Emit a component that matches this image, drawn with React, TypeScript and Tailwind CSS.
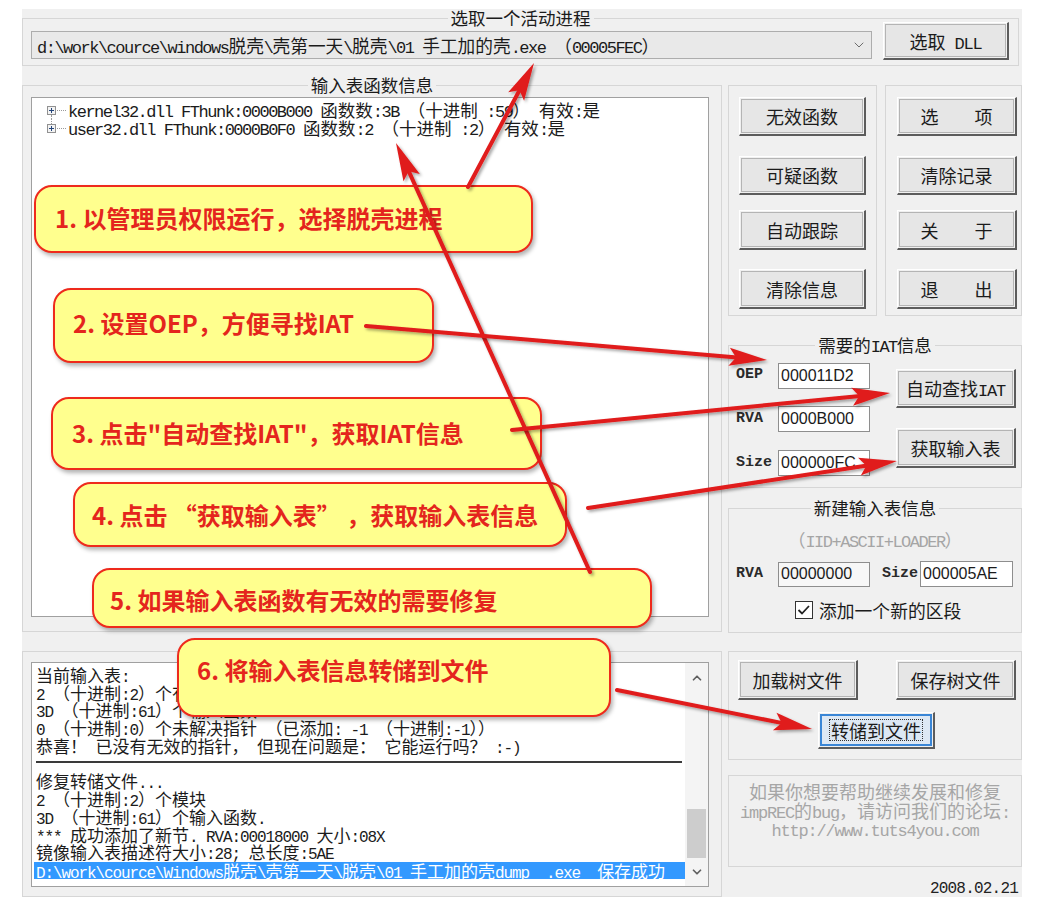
import React from "react";
import { ChevronDown, ChevronUp } from "lucide-react";

const A17 = "font-['Liberation_Mono',monospace] text-[17px] tracking-[-1.5px]";
const A16 = "font-['Liberation_Mono',monospace] text-[16px] tracking-[-1.1px]";
const A18 = "font-['Liberation_Mono',monospace] text-[17px] tracking-[-1.2px]";

function M({ t, a }: { t: string; a: string }) {
  const parts = t.split(/([\x20-\x7e]+)/);
  return (
    <>
      {parts.map((p, i) =>
        i % 2 === 1 ? (
          <span key={i} className={a}>
            {p}
          </span>
        ) : (
          <React.Fragment key={i}>{p}</React.Fragment>
        )
      )}
    </>
  );
}

function Group({
  title,
  className = "",
  bodyClass = "",
  children,
}: {
  title?: string;
  className?: string;
  bodyClass?: string;
  children?: React.ReactNode;
}) {
  return (
    <div className={`flex flex-col ${className}`}>
      <div className="flex h-[18px] shrink-0">
        <div className="flex-1 mt-[9px] border-t border-l border-[#d6d6d6]" />
        {title && (
          <span className="px-[3px] h-[18px] text-[17.5px] leading-[18px] text-[#1b1b1b] whitespace-pre">
            <M t={title} a={A17} />
          </span>
        )}
        <div className="flex-1 mt-[9px] border-t border-r border-[#d6d6d6]" />
      </div>
      <div className={`border-x border-b border-[#d6d6d6] ${bodyClass}`}>{children}</div>
    </div>
  );
}

function Btn({ label, className = "", focus = false }: { label: string; className?: string; focus?: boolean }) {
  return (
    <div
      className={`flex shrink-0 border-t border-l border-t-white border-l-white border-r-2 border-b-2 border-r-[#5c5c5c] border-b-[#5c5c5c] p-px ${className}`}
    >
      {focus ? (
        <div className="flex flex-1 items-center justify-center border-2 border-[#3a86d6] bg-[#dde8f4] text-[18px] leading-[20px] text-[#1b1b1b] whitespace-pre">
          <span className="outline-1 outline-dotted outline-[#333] px-[1px] h-[20px]">
            <M t={label} a={A18} />
          </span>
        </div>
      ) : (
        <div className="flex flex-1 items-center justify-center border border-[#b4b4b4] bg-[#e6e6e6] text-[18px] leading-[20px] text-[#1b1b1b] whitespace-pre">
          <span className="h-[20px]">
            <M t={label} a={A18} />
          </span>
        </div>
      )}
    </div>
  );
}

function Inp({ v, className = "" }: { v: string; className?: string }) {
  return (
    <div
      className={`flex items-center border border-[#8e8e8e] pl-[2px] font-['Liberation_Sans',sans-serif] text-[16px] leading-[18px] text-[#1b1b1b] ${className}`}
    >
      {v}
    </div>
  );
}

function Lbl({ t, className = "" }: { t: string; className?: string }) {
  return (
    <div className={`font-['Liberation_Mono',monospace] font-bold text-[15px] leading-[18px] text-[#2a2a2a] ${className}`}>
      {t}
    </div>
  );
}

function TreeRow({ t, first }: { t: string; first: boolean }) {
  return (
    <div className="flex h-[18px] items-center whitespace-pre text-[17.5px] leading-[18px] text-[#1b1b1b]">
      <div className="flex flex-col items-center w-[9px] h-[18px]">
        <div className={first ? "h-[4.5px]" : "h-[4.5px] border-l border-dotted border-[#9a9a9a]"} />
        <svg width="9" height="9" viewBox="0 0 9 9">
          <rect x="0.5" y="0.5" width="8" height="8" fill="#f3f3f3" stroke="#919191" />
          <path d="M2 4.5h5M4.5 2v5" stroke="#24457a" strokeWidth="1" />
        </svg>
        <div className={first ? "h-[4.5px] border-l border-dotted border-[#9a9a9a]" : "h-[4.5px]"} />
      </div>
      <div className="w-[9px] ml-px border-t border-dotted border-[#9a9a9a]" />
      <span className="ml-[2px] h-[18px]">
        <M t={t} a={A17} />
      </span>
    </div>
  );
}

function LogLine({ t }: { t: string }) {
  return (
    <div className="h-[17.7px]">
      <M t={t} a={A16} />
    </div>
  );
}

function head(x1: number, y1: number, x2: number, y2: number) {
  const dx = x2 - x1;
  const dy = y2 - y1;
  const L = Math.hypot(dx, dy);
  const ux = dx / L;
  const uy = dy / L;
  const len = 38;
  const w = 9;
  const bx = x2 - ux * len;
  const by = y2 - uy * len;
  const px = -uy;
  const py = ux;
  const pts = [
    [x2, y2],
    [bx + px * w, by + py * w],
    [bx + ux * 7, by + uy * 7],
    [bx - px * w, by - py * w],
  ];
  return { pts: pts.map((p) => p.join(",")).join(" "), bx: bx + ux * 8, by: by + uy * 8 };
}

const arrows: [number, number, number, number][] = [
  [468, 187, 534, 63],
  [590, 572, 396, 143],
  [366, 326, 767, 360],
  [512, 430, 890, 393],
  [588, 508, 897, 461],
  [617, 690, 812, 729],
];

function Arrows() {
  return (
    <svg className="absolute left-0 top-0 pointer-events-none" width="1056" height="915" viewBox="0 0 1056 915">
      <defs>
        <filter id="sh" x="-20%" y="-20%" width="140%" height="140%">
          <feDropShadow dx="2" dy="2" stdDeviation="1.5" floodColor="#000" floodOpacity="0.35" />
        </filter>
      </defs>
      {arrows.map(([x1, y1, x2, y2], i) => {
        const h = head(x1, y1, x2, y2);
        return (
          <g key={i} filter="url(#sh)">
            <line x1={x1} y1={y1} x2={h.bx} y2={h.by} stroke="#e01b1b" strokeWidth="4" strokeLinecap="round" />
            <polygon points={h.pts} fill="#e01b1b" />
          </g>
        );
      })}
    </svg>
  );
}

const BUB =
  "absolute rounded-[18px] border-[2.5px] border-[#ee2a1c] bg-[#ffff8e] shadow-[2px_3px_4px_rgba(0,0,0,0.3)] text-[24px] leading-[28px] font-bold text-[#e4251d] whitespace-pre";

function Bubbles() {
  return (
    <>
      <div className={`${BUB} left-[34px] top-[185px] w-[499px] h-[68px] pt-[17px] pl-[19px]`}>1. 以管理员权限运行，选择脱壳进程</div>
      <div className={`${BUB} left-[53px] top-[288px] w-[381px] h-[75px] pt-[19px] pl-[18px]`}>2. 设置OEP，方便寻找IAT</div>
      <div className={`${BUB} left-[51px] top-[397px] w-[491px] h-[73px] pt-[20px] pl-[19px]`}>3. 点击"自动查找IAT"，获取IAT信息</div>
      <div className={`${BUB} left-[73px] top-[482px] w-[494px] h-[65px] pt-[17px] pl-[17px]`}>4. 点击 “获取输入表” ，获取输入表信息</div>
      <div className={`${BUB} left-[92px] top-[568px] w-[560px] h-[60px] pt-[16px] pl-[16px]`}>5. 如果输入表函数有无效的需要修复</div>
      <div className={`${BUB} left-[177px] top-[638px] w-[434px] h-[79px] pt-[16px] pl-[18px]`}>6. 将输入表信息转储到文件</div>
    </>
  );
}

export default function App() {
  return (
    <div className="relative w-[1056px] h-[915px] overflow-hidden bg-white pl-[22px] pt-[9px] font-['Noto_Sans_CJK_SC',sans-serif] text-[#1b1b1b]">
      <div className="w-[1000px] h-[888px] bg-[#f0f0f0] flex flex-col">
        {/* top group */}
        <Group title="选取一个活动进程" className="w-[997px]" bodyClass="h-[39px] flex items-start pl-[8px]">
          <div className="mt-[4px] w-[841px] h-[28px] border border-[#adadad] bg-[#e9e9e9] flex items-center pl-[5px] pr-[4px] whitespace-pre text-[17.7px] leading-[20px]">
            <span className="flex-1 h-[20px]">
              <M t={"d:\\work\\cource\\windows脱壳\\壳第一天\\脱壳\\01 手工加的壳.exe （00005FEC）"} a={A17} />
            </span>
            <ChevronDown size={16} strokeWidth={1.5} color="#6d6d6d" />
          </div>
          <Btn label="选取 DLL" className="ml-[11px] -mt-[5px] w-[126px] h-[38px]" />
        </Group>

        <div className="flex flex-1">
          {/* left column */}
          <div className="w-[700px] flex flex-col">
            <Group title="输入表函数信息" className="mt-[10px]" bodyClass="h-[538px] pl-[8px] pt-[3px]">
              <div className="w-[678px] h-[520px] border border-[#a0a0a0] bg-white pt-[3px] pl-[15px]">
                <TreeRow first t="kernel32.dll FThunk:0000B000 函数数:3B （十进制 :59） 有效:是" />
                <TreeRow first={false} t="user32.dll FThunk:0000B0F0 函数数:2 （十进制 :2） 有效:是" />
              </div>
            </Group>
            <Group className="mt-[10px] flex-1" bodyClass="flex-1 pl-[8px] pt-[2px]">
              <div className="w-[678px] h-[225px] border border-[#a0a0a0] bg-white flex">
                <div className="flex-1 pt-[3px] pl-[4px] overflow-hidden whitespace-pre text-[17px] leading-[17.7px] text-[#1b1b1b]">
                  <LogLine t="当前输入表:" />
                  <LogLine t="2 （十进制:2）个有效模块." />
                  <LogLine t="3D （十进制:61）个输入函数." />
                  <LogLine t="0 （十进制:0）个未解决指针 （已添加: -1 （十进制:-1））" />
                  <LogLine t="恭喜！ 已没有无效的指针， 但现在问题是： 它能运行吗？ :-)" />
                  <div className="mt-[7px] mb-[9px] h-[2px] bg-[#3a3a3a] mr-[3px]" />
                  <LogLine t="修复转储文件..." />
                  <LogLine t="2 （十进制:2）个模块" />
                  <LogLine t="3D （十进制:61）个输入函数." />
                  <LogLine t="*** 成功添加了新节. RVA:00018000 大小:08X" />
                  <LogLine t="镜像输入表描述符大小:28; 总长度:5AE" />
                  <div className="-ml-[2px] mt-[1px] h-[17px] leading-[17px] bg-[#3399ff] text-white pl-[2px] overflow-hidden">
                    <M t={"D:\\work\\cource\\Windows脱壳\\壳第一天\\脱壳\\01 手工加的壳dump_ .exe  保存成功"} a={A16} />
                  </div>
                </div>
                <div className="w-[23px] bg-[#f4f4f4] flex flex-col items-center">
                  <div className="h-[30px] flex items-center justify-center">
                    <ChevronUp size={14} strokeWidth={3} color="#606060" />
                  </div>
                  <div className="flex-1" />
                  <div className="h-[49px] w-[19px] bg-[#cdcdcd]" />
                  <div className="h-[28px] flex items-center justify-center">
                    <ChevronDown size={14} strokeWidth={3} color="#606060" />
                  </div>
                </div>
              </div>
            </Group>
          </div>

          {/* right column */}
          <div className="ml-[6px] w-[294px] flex flex-col">
            <div className="mt-[10px] flex gap-[8px]">
              <Group className="w-[149px]" bodyClass="h-[222px] pt-[3px] pl-[10px] flex flex-col">
                <Btn label="无效函数" className="w-[127px] h-[39px]" />
                <Btn label="可疑函数" className="mt-[20px] w-[127px] h-[39px]" />
                <Btn label="自动跟踪" className="mt-[15px] w-[127px] h-[40px]" />
                <Btn label="清除信息" className="mt-[19px] w-[127px] h-[40px]" />
              </Group>
              <Group className="w-[137px]" bodyClass="h-[222px] pt-[3px] pl-[11px] flex flex-col">
                <Btn label="选　　项" className="w-[120px] h-[39px]" />
                <Btn label="清除记录" className="mt-[20px] w-[120px] h-[39px]" />
                <Btn label="关　　于" className="mt-[15px] w-[120px] h-[40px]" />
                <Btn label="退　　出" className="mt-[19px] w-[120px] h-[40px]" />
              </Group>
            </div>

            <Group title="需要的IAT信息" className="mt-[20px]" bodyClass="h-[134px] flex">
              <div className="pl-[7px] pt-[9px] flex flex-col">
                <div className="flex items-center h-[26px]">
                  <Lbl t="OEP" className="w-[42px] -mt-[3px]" />
                  <Inp v="000011D2" className="w-[92px] h-[26px] bg-white" />
                </div>
                <div className="flex items-center h-[26px] mt-[17px]">
                  <Lbl t="RVA" className="w-[42px]" />
                  <Inp v="0000B000" className="w-[92px] h-[26px] bg-white" />
                </div>
                <div className="flex items-center h-[26px] mt-[18px]">
                  <Lbl t="Size" className="w-[42px]" />
                  <Inp v="000000FC" className="w-[92px] h-[26px] bg-white" />
                </div>
              </div>
              <div className="ml-[26px] pt-[15px] flex flex-col">
                <Btn label="自动查找IAT" className="w-[120px] h-[39px]" />
                <Btn label="获取输入表" className="mt-[20px] w-[120px] h-[40px]" />
              </div>
            </Group>

            <Group title="新建输入表信息" className="mt-[11px]" bodyClass="h-[116px] flex flex-col">
              <div className="mt-[14px] h-[18px] text-center text-[17.5px] leading-[18px] text-[#a5a5a5] whitespace-pre">
                <M t="（IID+ASCII+LOADER）" a={A17} />
              </div>
              <div className="mt-[11px] h-[28px] flex items-center pl-[7px]">
                <Lbl t="RVA" className="w-[42px]" />
                <Inp v="00000000" className="w-[92px] h-[25px] bg-[#f7f7f7]" />
                <Lbl t="Size" className="ml-[12px] w-[38px]" />
                <Inp v="000005AE" className="w-[93px] h-[26px] bg-white" />
              </div>
              <div className="mt-[12px] h-[20px] flex items-center pl-[66px]">
                <svg width="18" height="18" viewBox="0 0 18 18">
                  <rect x="0.5" y="0.5" width="17" height="17" fill="#ffffff" stroke="#333333" />
                  <path d="M3.5 9 L7 12.5 L14 5" fill="none" stroke="#222222" strokeWidth="1.8" />
                </svg>
                <span className="ml-[6px] text-[17.8px] leading-[20px]">添加一个新的区段</span>
              </div>
            </Group>

            <Group className="mt-[9px]" bodyClass="h-[100px] flex flex-col">
              <div className="flex pl-[9px]">
                <Btn label="加载树文件" className="w-[120px] h-[40px]" />
                <Btn label="保存树文件" className="ml-[38px] w-[120px] h-[40px]" />
              </div>
              <Btn label="转储到文件" focus className="mt-[12px] ml-[89px] w-[117px] h-[37px]" />
            </Group>

            <div className="mt-[15px] h-[92px] border border-[#d6d6d6] pt-[6px] text-center text-[#a6a6a6] text-[18px] leading-[18.5px] whitespace-pre">
              <div className="h-[18.5px]">如果你想要帮助继续发展和修复</div>
              <div className="h-[18.5px]">
                <M t="impREC的bug，请访问我们的论坛:" a={A18} />
              </div>
              <div className="h-[18.5px]">
                <M t="http://www.tuts4you.com" a={A18} />
              </div>
            </div>

            <div className="mt-[14px] text-right pr-[4px] font-['Liberation_Mono',monospace] text-[16px] tracking-[-0.8px] leading-[16px] text-[#222]">
              2008.02.21
            </div>
          </div>
        </div>
      </div>
      <Bubbles />
      <Arrows />
    </div>
  );
}
